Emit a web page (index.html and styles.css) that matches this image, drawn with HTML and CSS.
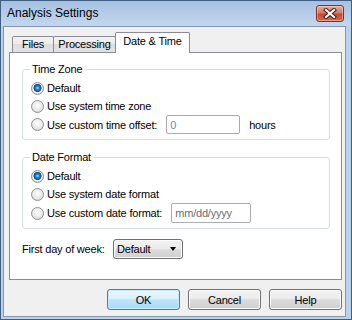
FILE: index.html
```html
<!DOCTYPE html>
<html lang="en">
<head>
    <meta charset="UTF-8" />
    <title>Analysis Settings</title>
    <link rel="stylesheet" href="styles.css">
</head>
<body>

    <div class="window">
        <div class="titlebar">
            <span class="title">Analysis Settings</span>
            <button class="close-button" aria-label="Close">
                <svg width="14" height="11" viewBox="0 0 14 11">
                    <path d="M3 2 L11 9 M11 2 L3 9" stroke="#4a1e16" stroke-width="4.2" stroke-linecap="square" />
                    <path d="M3 2 L11 9 M11 2 L3 9" stroke="#ffffff" stroke-width="2.2" stroke-linecap="square" />
                </svg>
            </button>
        </div>

        <div class="client">
            <div class="tabs">
                <div class="tab tab-files">Files</div>
                <div class="tab tab-processing">Processing</div>
                <div class="tab tab-date active">Date &amp; Time</div>
            </div>

            <div class="tab-panel">
                <fieldset class="group">
                    <legend>Time Zone</legend>
                    <div class="option"><span class="radio checked"></span>Default</div>
                    <div class="option"><span class="radio"></span>Use system time zone</div>
                    <div class="option option-input">
                        <span class="radio"></span>
                        <span>Use custom time offset:</span>
                        <input class="field field-offset" type="text" value="0">
                        <span>hours</span>
                    </div>
                </fieldset>

                <fieldset class="group group-date">
                    <legend>Date Format</legend>
                    <div class="option"><span class="radio checked"></span>Default</div>
                    <div class="option"><span class="radio"></span>Use system date format</div>
                    <div class="option option-input option-date">
                        <span class="radio"></span>
                        <span>Use custom date format:</span>
                        <input class="field field-date" type="text" placeholder="mm/dd/yyyy">
                    </div>
                </fieldset>

                <div class="week-row">
                    <label>First day of week:</label>
                    <div class="select">
                        <span>Default</span>
                        <span class="arrow"></span>
                    </div>
                </div>
            </div>

            <div class="buttons">
                <button class="btn btn-default">OK</button>
                <button class="btn">Cancel</button>
                <button class="btn">Help</button>
            </div>
        </div>
    </div>

</body>
</html>
```

FILE: styles.css
```css
* {
    box-sizing: border-box;
    margin: 0;
    padding: 0;
}

body {
    font-family: 'Liberation Sans', Arial, sans-serif;
    font-size: 11px;
    letter-spacing: -0.2px;
    color: #000;
    background: #fff;
}

.window {
    width: 352px;
    height: 320px;
    display: flex;
    flex-direction: column;
    background: #b9d1ea;
    border: 1px solid #3f5e82;
    padding: 0 5px 2px 2px;
}

.titlebar {
    height: 25px;
    margin: 0 -5px 0 -2px;
    display: flex;
    justify-content: space-between;
    align-items: flex-start;
    background: linear-gradient(#a6c1e1, #c3d7ef);
}

    .titlebar .title {
        font-size: 12px;
        letter-spacing: 0;
        line-height: 25px;
        padding-left: 6px;
    }

.close-button {
    width: 28px;
    height: 17px;
    margin: 4px 7px 0 0;
    display: flex;
    justify-content: center;
    align-items: center;
    border: 1px solid #7c3428;
    border-radius: 3px;
    background: linear-gradient(#e9ad9c, #d77a64 45%, #c54a31 55%, #d36c52);
    box-shadow: inset 0 0 0 1px rgba(255, 255, 255, 0.35);
}

.client {
    flex: 1;
    display: flex;
    flex-direction: column;
    background: #f0f0f0;
    border: 1px solid #8497ae;
}

.tabs {
    display: flex;
    align-items: flex-end;
    height: 20px;
    margin: 5px 0 0 8px;
}

.tab {
    height: 16px;
    line-height: 15px;
    text-align: center;
    border: 1px solid #898c95;
    border-bottom: 0;
    border-radius: 2px 2px 0 0;
    background: linear-gradient(#f3f3f3, #ebebeb 50%, #dddddd 50%, #e3e3e3);
}

.tab-files {
    width: 42px;
}

.tab-processing {
    width: 63px;
    margin-left: -1px;
}

.tab-date {
    width: 75px;
    margin-left: -1px;
}

.tab.active {
    position: relative;
    z-index: 1;
    height: 21px;
    line-height: 16px;
    margin-bottom: -1px;
    background: #fff;
}

.tab-panel {
    margin: 0 3px 0 5px;
    padding: 0 11px 20px 12px;
    background: #fff;
    border: 1px solid #898c95;
}

.group {
    margin-top: 10px;
    padding: 3px 8px 5px 8px;
    border: 1px solid #d5dfe5;
    border-radius: 3px;
    min-width: 0;
}

    .group legend {
        padding: 0 2px;
        margin-left: -1px;
        line-height: 13px;
    }

.group-date {
    margin-top: 11px;
}

.option {
    display: flex;
    align-items: center;
    height: 18px;
}

.option-input {
    height: 19px;
}

.option-date {
    height: 20px;
}

.radio {
    width: 13px;
    height: 13px;
    margin-right: 3px;
    flex-shrink: 0;
    border-radius: 50%;
    border: 1px solid #8f8f8f;
    background: radial-gradient(circle at 50% 40%, #ffffff, #e8e8e8 55%, #cfcfcf);
}

    .radio.checked {
        background: radial-gradient(circle at 50% 45%, #a9e6ff 0, #2f8fd6 1.5px, #0e5aa7 3.2px, #24496e 3.8px, #f4f4f4 4.3px, #e2e2e2 5.5px, #cfcfcf);
    }

.field {
    font-family: inherit;
    font-size: 11px;
    letter-spacing: -0.2px;
    border: 1px solid #a9abb0;
    border-radius: 2px;
    background: #fff;
    padding: 0 3px;
    outline: none;
}

.field-offset {
    width: 74px;
    height: 19px;
    margin: 0 9px;
    color: #6b8db5;
}

.field-date {
    width: 80px;
    height: 20px;
    margin-left: 9px;
}

    .field-date::placeholder {
        color: #6d6d6d;
    }

.week-row {
    display: flex;
    align-items: center;
    margin-top: 10px;
}

    .week-row label {
        width: 91px;
    }

.select {
    width: 70px;
    height: 20px;
    display: flex;
    justify-content: space-between;
    align-items: center;
    padding: 0 6px 0 3px;
    border: 1px solid #707070;
    border-radius: 3px;
    background: linear-gradient(#f2f2f2, #ebebeb 50%, #dddddd 50%, #cfcfcf);
    box-shadow: inset 0 0 0 1px #fbfbfb;
}

    .select .arrow {
        width: 0;
        height: 0;
        border-left: 3.5px solid transparent;
        border-right: 3.5px solid transparent;
        border-top: 4px solid #000;
    }

.buttons {
    display: flex;
    justify-content: flex-end;
    gap: 8px;
    margin-top: 9px;
    padding-right: 3px;
}

.btn {
    width: 73px;
    height: 21px;
    font-family: inherit;
    font-size: 11px;
    letter-spacing: -0.2px;
    color: #000;
    border: 1px solid #707070;
    border-radius: 3px;
    background: linear-gradient(#f2f2f2, #ebebeb 50%, #dddddd 50%, #cfcfcf);
    box-shadow: inset 0 0 0 1px #fbfbfb;
}

.btn-default {
    border-color: #3c7fb1;
    background: linear-gradient(#eaf6fd, #d9f0fc 50%, #bee6fd 50%, #a7d9f5);
    box-shadow: inset 0 0 0 1px #c9ecfd;
}
```
